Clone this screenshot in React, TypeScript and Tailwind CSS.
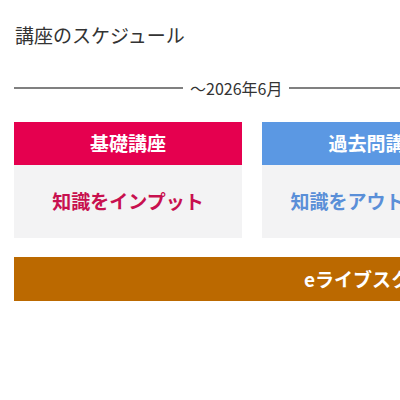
import React from 'react';

const courses = [
  { title: '基礎講座', body: '知識をインプット', head: 'bg-[#e5004f]', text: 'text-[#c8104f]' },
  { title: '過去問講座', body: '知識をアウトプット', head: 'bg-[#5b98e3]', text: 'text-[#5a8fd8]' },
  { title: '答練講座', body: '実力を確認', head: 'bg-[#2fa86f]', text: 'text-[#2a9a64]' },
];

const App = () => {
  return (
    <div className="w-full overflow-hidden bg-white" style={{ fontFamily: '"Noto Sans CJK JP", "Noto Sans", sans-serif' }}>
      <section className="w-[752px] px-[14px] pt-[21px] pb-10 text-[#333]">
        <h2 className="text-[19px] leading-[28px] pl-px">講座のスケジュール</h2>

        <div className="mt-[29px] flex items-center gap-[7px]">
          <div className="h-[2px] w-[169px] bg-[#808080]"></div>
          <span className="text-[16px] leading-[20px]">～2026年6月</span>
          <div className="h-[2px] flex-1 bg-[#808080]"></div>
        </div>

        <div className="mt-[24px] grid grid-cols-3 gap-[20px]">
          {courses.map((c) => (
            <div key={c.title} className="bg-[#f3f3f4]">
              <div className={`${c.head} h-[43px] flex items-center justify-center text-white font-bold text-[19px]`}>
                {c.title}
              </div>
              <div className={`h-[73px] flex items-center justify-center font-bold text-[19px] ${c.text}`}>
                {c.body}
              </div>
            </div>
          ))}
        </div>

        <div className="mt-[19px] h-[44px] bg-[#bb6900] flex items-center justify-center text-white font-bold text-[19px]">
          eライブスクール
        </div>
      </section>
    </div>
  );
};

export default App;
